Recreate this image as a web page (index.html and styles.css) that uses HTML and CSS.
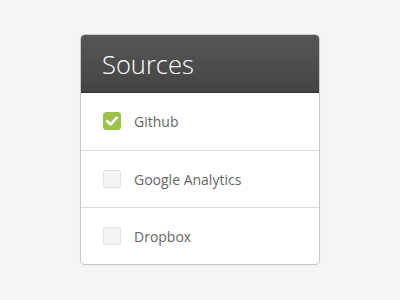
FILE: index.html
```html
<!DOCTYPE html>
<html>
<head>
<meta charset="utf-8">
<link rel="stylesheet" href="styles.css">
</head>
<body>
<div class="card">
  <div class="header">Sources</div>
  <ul class="list">
    <li class="row"><span class="box checked"><svg viewBox="0 0 18 18" width="18" height="18"><path d="M4.2 9.2 L7.6 12.4 L13.8 5.6" fill="none" stroke="#fff" stroke-width="2.6" stroke-linecap="round" stroke-linejoin="round"/></svg></span><span class="label">Github</span></li>
    <li class="row"><span class="box"></span><span class="label">Google Analytics</span></li>
    <li class="row"><span class="box"></span><span class="label">Dropbox</span></li>
  </ul>
</div>
</body>
</html>
```
FILE: styles.css
```css
html, body { margin: 0; padding: 0; }
body {
  background: #f5f5f5;
  width: 400px;
  height: 300px;
  font-family: "Open Sans", sans-serif;
  padding-top: 35px;
  box-sizing: border-box;
}
.card {
  width: 238px;
  margin-left: 81px;
  background: #fff;
  border-radius: 4px;
  box-shadow: 0 0 0 1px #c8c8c8, 0 1px 2px rgba(0,0,0,0.15);
  overflow: hidden;
}
.header {
  height: 58px;
  box-sizing: border-box;
  background: linear-gradient(#575757, #444444);
  color: #fff;
  font-weight: 300;
  font-size: 25.5px;
  line-height: 58px;
  padding-left: 21px;
  border-bottom: 1px solid #333;
}
.list { list-style: none; margin: 0; padding: 0; }
.row {
  height: 57px;
  box-sizing: border-box;
  display: flex;
  align-items: center;
  padding-left: 22px;
  border-top: 1px solid #dcdcdc;
}
.row:first-child { border-top: none; padding-bottom: 1px; }
.box {
  width: 18px;
  height: 18px;
  box-sizing: border-box;
  border: 1px solid #e0e0e0;
  background: #f4f4f4;
  border-radius: 3px;
  display: flex;
}
.box.checked { background: #9dc24c; border-color: #9dc24c; }
.box.checked svg { margin: -1px; }
.label {
  margin-left: 13px;
  font-size: 14px;
  color: #666;
}
```
